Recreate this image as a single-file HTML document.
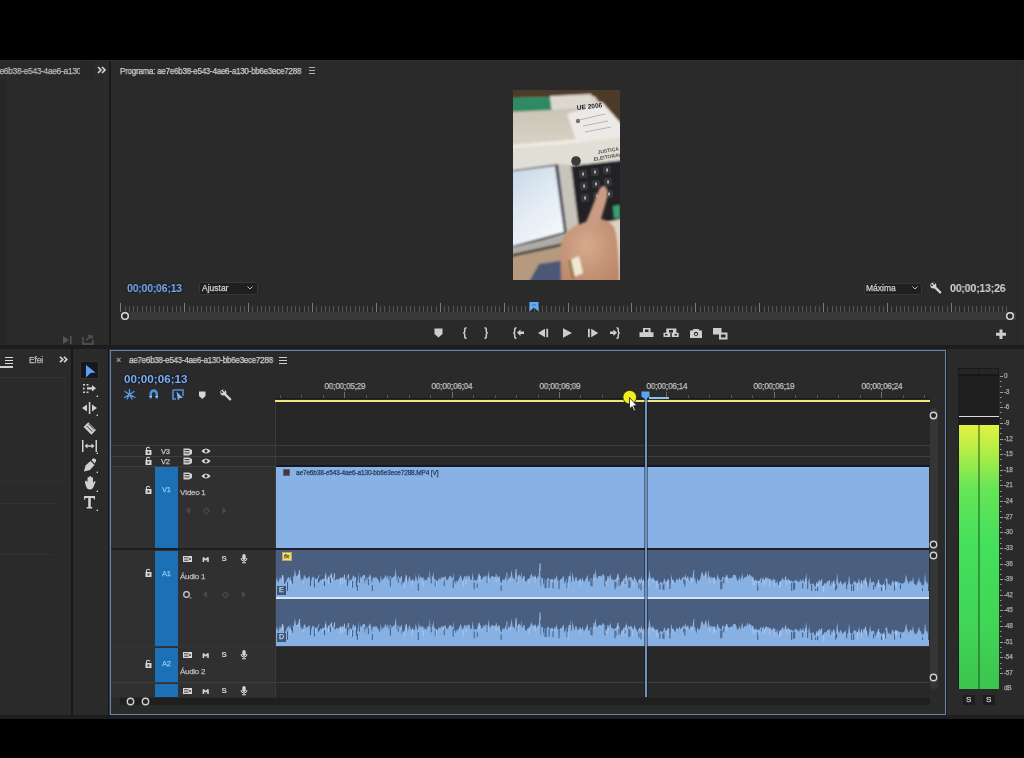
<!DOCTYPE html>
<html><head><meta charset="utf-8">
<style>
*{box-sizing:border-box}
html,body{margin:0;padding:0}
body{width:1024px;height:758px;background:#000;overflow:hidden;position:relative;font-family:"Liberation Sans",sans-serif;color:#c4c4c4}
.a{position:absolute}
.t{position:absolute;white-space:nowrap;font-size:8px;line-height:10px;-webkit-font-smoothing:antialiased;will-change:transform;-webkit-text-stroke:0.25px currentColor}
svg{position:absolute;overflow:visible}
</style></head><body>
<svg width="0" height="0" style="position:absolute"><defs><filter id="wb" x="-1%" y="-10%" width="102%" height="120%"><feGaussianBlur stdDeviation="0.45"/></filter></defs></svg>
<!-- top-left panel -->
<div class="a" style="left:0;top:60px;width:109px;height:286px;background:#2a2a2a"></div><div class="a" style="left:0;top:80px;width:6px;height:266px;background:#262626"></div>
<div class="a" style="left:109px;top:60px;width:2px;height:290px;background:#1a1a1a"></div>
<!-- program monitor -->
<div class="a" style="left:111px;top:60px;width:913px;height:286px;background:#2a2a2a"></div><div class="a" style="left:1017px;top:61px;width:2px;height:285px;background:#272727"></div><div class="a" style="left:0;top:60px;width:1024px;height:1px;background:#303030"></div>
<!-- gap -->
<div class="a" style="left:0;top:345px;width:1024px;height:4px;background:#1c1c1e"></div>
<!-- bottom panels -->
<div class="a" style="left:0;top:349px;width:71px;height:366px;background:#2a2a2a"></div>
<div class="a" style="left:71px;top:349px;width:2px;height:366px;background:#181818"></div>
<div class="a" style="left:73px;top:349px;width:35px;height:366px;background:#2a2a2a"></div>
<div class="a" style="left:108px;top:349px;width:2px;height:366px;background:#161616"></div>
<div class="a" style="left:110px;top:350px;width:836px;height:365px;background:#2a2a2a;border:1px solid #6a84ac;box-shadow:0 0 0 1px rgba(70,95,140,0.5)"></div>
<div class="a" style="left:946px;top:349px;width:1px;height:366px;background:#1c1c1c"></div>
<div class="a" style="left:947px;top:349px;width:77px;height:366px;background:#2a2a2a"></div>
<div class="a" style="left:0;top:715px;width:1024px;height:4px;background:#1e1e1e"></div>
<!-- top-left panel content -->
<div class="t" style="left:-5px;top:66px;font-size:8.5px;color:#bdbdbd;letter-spacing:-0.3px;transform-origin:0 0;transform:scaleX(0.985)">7e6b38-e543-4ae6-a130</div>
<div class="a" style="left:80px;top:61px;width:14px;height:20px;background:#272727"></div>
<svg style="left:97px;top:66px" width="10" height="8" viewBox="0 0 10 8"><path d="M1,1 L4,4 L1,7 M5,1 L8,4 L5,7" stroke="#d8d8d8" stroke-width="1.6" fill="none"/></svg>

<svg style="left:62px;top:335px" width="12" height="10" viewBox="0 0 12 10"><path d="M1,1 L7,5 L1,9 Z" fill="#555"/><rect x="8" y="1" width="1.5" height="8" fill="#555"/></svg>
<svg style="left:82px;top:334px" width="12" height="11" viewBox="0 0 12 11"><path d="M1,3 V10 H11 V6 M4,6 L9,3 M6,2 H10 V5" stroke="#555" stroke-width="1.4" fill="none"/></svg>

<!-- program monitor content -->
<div class="t" style="left:120px;top:65.5px;font-size:8.5px;color:#cfcfcf;letter-spacing:-0.25px;transform-origin:0 0;transform:scaleX(0.94)">Programa: ae7e6b38-e543-4ae6-a130-bb6e3ece7288</div>
<svg style="left:309px;top:67px" width="7" height="7" viewBox="0 0 7 7"><path d="M0,0.5 H6 M0,3.5 H6 M0,6.5 H6" stroke="#b0b0b0" stroke-width="1"/></svg>

<div class="t" style="left:126.5px;top:282px;font-size:11px;line-height:12px;font-weight:bold;color:#80b0ee;letter-spacing:-0.2px;-webkit-text-stroke:0;text-shadow:0 0 2px #061028,0 0 1px #061028,0 0 1px #061028;transform-origin:0 0;transform:scaleX(0.95)">00;00;06;13</div>
<div class="a" style="left:199px;top:282px;width:59px;height:13px;background:#1f1f1f;border:1px solid #363636;border-radius:2px"></div>
<div class="t" style="left:202px;top:283px;font-size:8.5px;color:#d0d0d0">Ajustar</div>
<svg style="left:247px;top:286px" width="6" height="4" viewBox="0 0 6 4"><path d="M0.5,0.5 L3,3 L5.5,0.5" stroke="#bbb" stroke-width="1" fill="none"/></svg>
<div class="a" style="left:863.5px;top:282.5px;width:58px;height:12px;background:#1f1f1f;border:1px solid #363636;border-radius:2px"></div>
<div class="t" style="left:866px;top:283px;font-size:8.5px;color:#d0d0d0">Máxima</div>
<svg style="left:912px;top:286px" width="6" height="4" viewBox="0 0 6 4"><path d="M0.5,0.5 L3,3 L5.5,0.5" stroke="#bbb" stroke-width="1" fill="none"/></svg>
<svg style="left:930px;top:282px" width="12" height="12" viewBox="0 0 12 12"><circle cx="3.3" cy="3.6" r="3" fill="#d4d4d4"/><path d="M3.8,4.2 L10.2,10.4" stroke="#d4d4d4" stroke-width="2.3" stroke-linecap="round"/><path d="M0.8,1.2 L3.2,3.6 L1.5,4.6 Z M2.2,0.2 L4.3,2.9 L5.6,1 Z" fill="#2a2a2a"/></svg>
<div class="t" style="left:950px;top:282px;font-size:11px;line-height:12px;font-weight:bold;color:#d4d4d4;letter-spacing:-0.2px;-webkit-text-stroke:0;transform-origin:0 0;transform:scaleX(0.96)">00;00;13;26</div>
<!-- monitor ruler -->
<svg style="left:0;top:0" width="1024" height="758"><path d="M125.5,306V312M129.5,306V312M133.5,306V312M137.5,306V312M142.5,306V312M146.5,306V312M150.5,306V312M154.5,306V312M159.5,306V312M163.5,306V312M167.5,306V312M172.5,306V312M176.5,306V312M180.5,306V312M189.5,306V312M193.5,306V312M197.5,306V312M201.5,306V312M206.5,306V312M210.5,306V312M214.5,306V312M218.5,306V312M223.5,306V312M227.5,306V312M231.5,306V312M235.5,306V312M240.5,306V312M244.5,306V312M252.5,306V312M257.5,306V312M261.5,306V312M265.5,306V312M269.5,306V312M274.5,306V312M278.5,306V312M282.5,306V312M287.5,306V312M291.5,306V312M295.5,306V312M299.5,306V312M304.5,306V312M308.5,306V312M316.5,306V312M321.5,306V312M325.5,306V312M329.5,306V312M333.5,306V312M338.5,306V312M342.5,306V312M346.5,306V312M350.5,306V312M355.5,306V312M359.5,306V312M363.5,306V312M367.5,306V312M372.5,306V312M380.5,306V312M384.5,306V312M389.5,306V312M393.5,306V312M397.5,306V312M401.5,306V312M406.5,306V312M410.5,306V312M414.5,306V312M419.5,306V312M423.5,306V312M427.5,306V312M431.5,306V312M436.5,306V312M444.5,306V312M448.5,306V312M453.5,306V312M457.5,306V312M461.5,306V312M465.5,306V312M470.5,306V312M474.5,306V312M478.5,306V312M482.5,306V312M487.5,306V312M491.5,306V312M495.5,306V312M499.5,306V312M508.5,306V312M512.5,306V312M516.5,306V312M521.5,306V312M525.5,306V312M529.5,306V312M534.5,306V312M538.5,306V312M542.5,306V312M546.5,306V312M551.5,306V312M555.5,306V312M559.5,306V312M563.5,306V312M572.5,306V312M576.5,306V312M580.5,306V312M585.5,306V312M589.5,306V312M593.5,306V312M597.5,306V312M602.5,306V312M606.5,306V312M610.5,306V312M614.5,306V312M619.5,306V312M623.5,306V312M627.5,306V312M636.5,306V312M640.5,306V312M644.5,306V312M649.5,306V312M653.5,306V312M657.5,306V312M661.5,306V312M666.5,306V312M670.5,306V312M674.5,306V312M678.5,306V312M683.5,306V312M687.5,306V312M691.5,306V312M700.5,306V312M704.5,306V312M708.5,306V312M712.5,306V312M717.5,306V312M721.5,306V312M725.5,306V312M729.5,306V312M734.5,306V312M738.5,306V312M742.5,306V312M746.5,306V312M751.5,306V312M755.5,306V312M764.5,306V312M768.5,306V312M772.5,306V312M776.5,306V312M781.5,306V312M785.5,306V312M789.5,306V312M793.5,306V312M798.5,306V312M802.5,306V312M806.5,306V312M810.5,306V312M815.5,306V312M819.5,306V312M827.5,306V312M832.5,306V312M836.5,306V312M840.5,306V312M844.5,306V312M849.5,306V312M853.5,306V312M857.5,306V312M861.5,306V312M866.5,306V312M870.5,306V312M874.5,306V312M879.5,306V312M883.5,306V312M891.5,306V312M896.5,306V312M900.5,306V312M904.5,306V312M908.5,306V312M913.5,306V312M917.5,306V312M921.5,306V312M925.5,306V312M930.5,306V312M934.5,306V312M938.5,306V312M942.5,306V312M947.5,306V312M955.5,306V312M959.5,306V312M964.5,306V312M968.5,306V312M972.5,306V312M976.5,306V312M981.5,306V312M985.5,306V312M989.5,306V312M993.5,306V312M998.5,306V312M1002.5,306V312M1006.5,306V312" stroke="#525252" stroke-width="1"/><path d="M120.5,303V312M184.5,303V312M248.5,303V312M312.5,303V312M376.5,303V312M440.5,303V312M504.5,303V312M568.5,303V312M631.5,303V312M695.5,303V312M759.5,303V312M823.5,303V312M887.5,303V312M951.5,303V312" stroke="#7a7a7a" stroke-width="1"/></svg>
<div class="a" style="left:120px;top:312px;width:896px;height:8px;background:#393939"></div>
<div class="a" style="left:120px;top:312px;width:10px;height:8px;background:#303030"></div>
<svg style="left:120px;top:311px" width="10" height="10" viewBox="0 0 10 10"><circle cx="5" cy="5" r="3.3" fill="#2a2a2a" stroke="#dcdcdc" stroke-width="1.5"/></svg>
<svg style="left:1005px;top:311px" width="10" height="10" viewBox="0 0 10 10"><circle cx="5" cy="5" r="3.3" fill="#2a2a2a" stroke="#dcdcdc" stroke-width="1.5"/></svg>
<svg style="left:528.5px;top:302px" width="10" height="10" viewBox="0 0 10 10"><path d="M0.5,0 H9.5 V9.5 L5,5.5 L0.5,9.5 Z" fill="#64aaf4"/><path d="M3,2 H7 V4.5 L5,3.5 L3,4.5 Z" fill="#4a90e0"/></svg>
<!-- transport -->
<svg style="left:0;top:0" width="1024" height="758">
<g fill="#cdcdcd" stroke="none">
<path d="M434.5,328.5 H442.5 V334 L438.5,337.5 L434.5,334 Z"/>
<path d="M466.5,327.8 q-1.8,0 -1.8,1.8 v1.8 q0,1.4 -1.4,1.6 q1.4,0.2 1.4,1.6 v1.8 q0,1.8 1.8,1.8" stroke="#cdcdcd" stroke-width="1.5" fill="none"/>
<path d="M484.5,327.8 q1.8,0 1.8,1.8 v1.8 q0,1.4 1.4,1.6 q-1.4,0.2 -1.4,1.6 v1.8 q0,1.8 -1.8,1.8" stroke="#cdcdcd" stroke-width="1.5" fill="none"/>
<path d="M516.5,327.8 q-1.8,0 -1.8,1.8 v1.8 q0,1.4 -1.4,1.6 q1.4,0.2 1.4,1.6 v1.8 q0,1.8 1.8,1.8" stroke="#cdcdcd" stroke-width="1.5" fill="none"/>
<path d="M517,332.8 L520.5,329.5 V331.6 H524 V334 H520.5 V336 Z"/>
<path d="M538,333 L545,328.8 V337.2 Z"/><rect x="546.3" y="328.8" width="1.8" height="8.4"/>
<path d="M563,328.3 L572,333 L563,337.7 Z"/>
<rect x="588" y="328.8" width="1.8" height="8.4"/><path d="M591.2,328.8 L598.2,333 L591.2,337.2 Z"/>
<path d="M616.5,327.8 q1.8,0 1.8,1.8 v1.8 q0,1.4 1.4,1.6 q-1.4,0.2 -1.4,1.6 v1.8 q0,1.8 -1.8,1.8" stroke="#cdcdcd" stroke-width="1.5" fill="none"/>
<path d="M617,332.8 L613.5,329.5 V331.6 H610 V334 H613.5 V336 Z"/>
<path d="M643,328 H650.5 V332.3 H653.5 V337 H639.5 V332.3 H643 Z M645,329.5 V332 H648.5 V329.5 Z" fill-rule="evenodd"/>
<path d="M666.3,328.5 H676.4 V332.7 H678.7 V337 H663.5 V332.7 H666.3 Z M669,330 V332.5 H673 V330 Z M665,334 V335.5 H667.5 V334 Z M674.5,334 V335.5 H677 V334 Z M670.3,332.7 V337 H671.8 V332.7 Z" fill-rule="evenodd"/>
<path d="M690,330.5 H692.5 L693.5,329 H698.5 L699.5,330.5 H702 V338 H690 Z M696,331.8 A2.2,2.2 0 1 0 696.01,331.8 Z M696,332.9 A1.2,1.2 0 1 1 695.99,332.9 Z" fill-rule="evenodd"/>
<rect x="713" y="328" width="8.5" height="6.5"/><path d="M719,332.5 H727.5 V339.5 H719 Z M721,334.5 V337.5 H725.5 V334.5 Z" fill-rule="evenodd"/>
<path d="M999.5,329.5 H1002.5 V332.8 H1006 V335.8 H1002.5 V339 H999.5 V335.8 H996 V332.8 H999.5 Z"/>
</g></svg>
<!-- video frame -->
<svg style="left:513px;top:90px" width="107" height="190" viewBox="0 0 107 190">
<defs>
<filter id="bl" x="-10%" y="-10%" width="120%" height="120%"><feGaussianBlur stdDeviation="1.2"/></filter>
<filter id="bl2" x="-10%" y="-10%" width="120%" height="120%"><feGaussianBlur stdDeviation="0.6"/></filter>
<linearGradient id="scr" x1="0" y1="0" x2="0.6" y2="1"><stop offset="0" stop-color="#c4d4e6"/><stop offset="0.45" stop-color="#dde7f2"/><stop offset="1" stop-color="#f4f7fb"/></linearGradient>
<linearGradient id="body" x1="0" y1="0" x2="0" y2="1"><stop offset="0" stop-color="#c9c4b4"/><stop offset="1" stop-color="#dcd8cc"/></linearGradient>
<radialGradient id="skin" cx="0.45" cy="0.4" r="0.7"><stop offset="0" stop-color="#d6aa8e"/><stop offset="1" stop-color="#b98568"/></radialGradient>
<clipPath id="vc"><rect width="107" height="190"/></clipPath>
</defs>
<g clip-path="url(#vc)">
<rect width="107" height="190" fill="#cfc9ba"/>
<g filter="url(#bl)">
<path d="M-5,-5 H112 V46 L82,6 L-5,8 Z" fill="#4e3a2c"/>
<path d="M-5,8 L37,7 L39,22 L-5,24 Z" fill="#2f8a62"/>
<path d="M37,6 L78,4 L84,17 L39,21 Z" fill="#dcd8d0"/>
<path d="M-5,22 L39,20 L84,16 L60,24 L66,62 L-5,72 Z" fill="url(#body)"/>
<path d="M54,24 L89,12 L112,38 L112,48 L64,53 Z" fill="#ece9e6"/>
<path d="M-5,60 L64,53 L112,47 L112,78 L-5,86 Z" fill="#e1ded6"/>
<path d="M-5,55 L66,49 L66,53 L-5,59 Z" fill="#eeebe4"/>
<path d="M57,76 L112,70 L112,134 L66,140 Z" fill="#222427"/>
<path d="M-5,81 L46,74 L55,143 L-5,160 Z" fill="#3b3e48"/>
<path d="M-5,82 L42,76 L51,142 L-5,157 Z" fill="url(#scr)"/>
<path d="M45,74 L58,75 L66,140 L54,144 Z" fill="#c8c4bc"/>
<path d="M-5,158 L62,143 L64,152 L-5,170 Z" fill="#aeaba6"/>
<path d="M-5,165 L64,150 L64,153 L-5,168 Z" fill="#4a3e34"/>
<path d="M-5,168 L64,153 L70,195 L-5,195 Z" fill="#b59a80"/>
<path d="M14,195 L26,174 L52,170 L56,195 Z" fill="#4c5878"/>
<path d="M94,132 L112,128 L112,195 L94,195 Z" fill="#dcd2c2"/>
<path d="M100,116 L107,115 L107,128 L101,128 Z" fill="#3c9e6e"/>
</g>
<g filter="url(#bl2)"><g fill="#34363a"><rect x="66" y="80" width="8" height="8" rx="1.5" transform="rotate(-6 70 84)"/><rect x="78" y="78" width="8" height="8" rx="1.5" transform="rotate(-6 82 82)"/><rect x="90" y="76" width="8" height="8" rx="1.5" transform="rotate(-6 94 80)"/><rect x="67" y="92" width="8" height="8" rx="1.5" transform="rotate(-6 71 96)"/><rect x="79" y="90" width="8" height="8" rx="1.5" transform="rotate(-6 83 94)"/><rect x="91" y="88" width="8" height="8" rx="1.5" transform="rotate(-6 95 92)"/><rect x="68" y="104" width="8" height="8" rx="1.5" transform="rotate(-6 72 108)"/><rect x="80" y="102" width="8" height="8" rx="1.5" transform="rotate(-6 84 106)"/><rect x="92" y="100" width="8" height="8" rx="1.5" transform="rotate(-6 96 104)"/></g><g fill="#d0d0d0"><rect x="69.3" y="82.5" width="1.5" height="3"/><rect x="81.3" y="80.5" width="1.5" height="3"/><rect x="93.3" y="78.5" width="1.5" height="3"/><rect x="70.3" y="94.5" width="1.5" height="3"/><rect x="82.3" y="92.5" width="1.5" height="3"/><rect x="94.3" y="90.5" width="1.5" height="3"/><rect x="71.3" y="106.5" width="1.5" height="3"/><rect x="83.3" y="104.5" width="1.5" height="3"/><rect x="95.3" y="102.5" width="1.5" height="3"/></g></g>
<g filter="url(#bl)">
<path d="M48,195 L47,158 Q50,142 62,136 L80,129 Q94,127 101,137 Q106,152 106,195 Z" fill="url(#skin)"/>
<path d="M70,140 L86,100 Q89,94 93,97 Q96,102 93,112 L84,142 Z" fill="#c99b82"/>
<path d="M57,170 L66,166 L70,183 L61,187 Z" fill="#f1e9d4"/>
<path d="M55,171 L58,169 L62,188 L59,190 Z" fill="#9c7a4a"/>
</g>
<g filter="url(#bl2)">
<text x="64" y="20" font-size="6.6" font-weight="bold" fill="#1e1e1e" font-family="Liberation Sans" transform="rotate(-6 64 20)">UE 2006</text>
<path d="M66,30 L92,24 M70,36 L95,31 M72,42 L98,37" stroke="#b8b4b2" stroke-width="1"/>
<circle cx="65" cy="31" r="2.2" fill="#777"/>
<text x="85" y="64" font-size="5" font-weight="bold" fill="#505050" font-family="Liberation Sans" transform="rotate(-10 85 64)">JUSTIÇA</text>
<text x="81" y="71" font-size="5" font-weight="bold" fill="#505050" font-family="Liberation Sans" transform="rotate(-10 81 71)">ELEITORAL</text>
<circle cx="63" cy="71" r="4.8" fill="#3a3a3a"/>

</g>
</g></svg>
<!-- timeline ruler -->
<svg style="left:0;top:0" width="1024" height="758"><path d="M280.5,395V399M301.5,395V399M323.5,395V399M366.5,395V399M387.5,395V399M409.5,395V399M430.5,395V399M473.5,395V399M495.5,395V399M516.5,395V399M538.5,395V399M580.5,395V399M602.5,395V399M623.5,395V399M645.5,395V399M688.5,395V399M709.5,395V399M731.5,395V399M752.5,395V399M795.5,395V399M817.5,395V399M838.5,395V399M860.5,395V399M903.5,395V399M924.5,395V399" stroke="#555" stroke-width="1"/><path d="M344.5,392V399M452.5,392V399M559.5,392V399M666.5,392V399M774.5,392V399M881.5,392V399" stroke="#6e6e6e" stroke-width="1"/></svg>
<div class="t" style="left:319.7px;top:381px;width:50px;text-align:center;font-size:9px;color:#c2c2c2;letter-spacing:-0.2px;transform:scaleX(0.9)">00;00;05;29</div>
<div class="t" style="left:427.1px;top:381px;width:50px;text-align:center;font-size:9px;color:#c2c2c2;letter-spacing:-0.2px;transform:scaleX(0.9)">00;00;06;04</div>
<div class="t" style="left:534.5px;top:381px;width:50px;text-align:center;font-size:9px;color:#c2c2c2;letter-spacing:-0.2px;transform:scaleX(0.9)">00;00;06;09</div>
<div class="t" style="left:641.9px;top:381px;width:50px;text-align:center;font-size:9px;color:#c2c2c2;letter-spacing:-0.2px;transform:scaleX(0.9)">00;00;06;14</div>
<div class="t" style="left:749.3px;top:381px;width:50px;text-align:center;font-size:9px;color:#c2c2c2;letter-spacing:-0.2px;transform:scaleX(0.9)">00;00;06;19</div>
<div class="t" style="left:856.7px;top:381px;width:50px;text-align:center;font-size:9px;color:#c2c2c2;letter-spacing:-0.2px;transform:scaleX(0.9)">00;00;06;24</div>
<!-- timeline header -->
<div class="t" style="left:116px;top:355px;font-size:9px;color:#aaa">×</div>
<div class="t" style="left:129px;top:355px;font-size:8.5px;color:#d0d0d0;letter-spacing:-0.3px;transform-origin:0 0;transform:scaleX(0.95)">ae7e6b38-e543-4ae6-a130-bb6e3ece7288</div>
<svg style="left:279px;top:357px" width="8" height="7" viewBox="0 0 8 7"><path d="M0,0.5 H8 M0,3.5 H8 M0,6.5 H8" stroke="#d0d0d0" stroke-width="1"/></svg>
<div class="t" style="left:123.5px;top:372.5px;font-size:11px;line-height:12px;font-weight:bold;color:#80b0ee;letter-spacing:0px;-webkit-text-stroke:0;text-shadow:0 0 2px #061028,0 0 1px #061028,0 0 1px #061028;transform-origin:0 0;transform:scaleX(1.06)">00;00;06;13</div>
<!-- track area -->
<div class="a" style="left:111px;top:467px;width:164px;height:230px;background:#303030"></div><div class="a" style="left:111px;top:446px;width:164px;height:21px;background:#2c2c2c"></div>
<div class="a" style="left:276px;top:402px;width:654px;height:296px;background:#282828"></div>
<div class="a" style="left:275px;top:402px;width:1px;height:296px;background:#3a3a3a"></div>
<div class="a" style="left:276px;top:402px;width:654px;height:43px;background:#262626"></div><div class="a" style="left:111px;top:445px;width:819px;height:1px;background:#3e3e3e"></div>
<div class="a" style="left:111px;top:456px;width:819px;height:1px;background:#3e3e3e"></div>
<div class="a" style="left:276px;top:465px;width:654px;height:2px;background:#151a22"></div><div class="a" style="left:111px;top:466px;width:164px;height:1px;background:#3e3e3e"></div>
<div class="a" style="left:111px;top:548px;width:819px;height:2px;background:#1e1e1e"></div>
<div class="a" style="left:111px;top:646px;width:819px;height:1px;background:#363636"></div>
<div class="a" style="left:111px;top:682px;width:819px;height:1px;background:#3e3e3e"></div>
<div class="a" style="left:275px;top:398px;width:655px;height:1px;background:#1a1a1a"></div><div class="a" style="left:275px;top:399.5px;width:655px;height:2.5px;background:#e8e87c"></div>
<!-- video clip -->
<div class="a" style="left:276px;top:467px;width:653px;height:81px;background:#88b2e6"></div>
<div class="a" style="left:283px;top:469px;width:7px;height:7px;background:#3a3a48;border:1px solid #6a5a6a"></div>
<div class="t" style="left:296px;top:468px;font-size:6.5px;color:#29405f;letter-spacing:-0.15px">ae7e6b38-e543-4ae6-a130-bb6e3ece7288.MP4 [V]</div>
<!-- audio clip -->
<div class="a" style="left:276px;top:550px;width:653px;height:96px;background:#4a5f80"></div>
<svg style="left:276px;top:550px" width="653" height="47" viewBox="0 0 654 47"><g filter="url(#wb)"><path d="M0,47 L0,31.5 L1,26.9 L2,33.1 L3,30.9 L4,26.7 L5,29.8 L6,26.4 L7,25.1 L8,28.5 L9,32.7 L10,32.0 L11,29.2 L12,27.3 L13,26.9 L14,30.1 L15,25.5 L16,26.2 L17,28.0 L18,25.8 L19,19.1 L20,26.0 L21,25.9 L22,24.8 L23,22.7 L24,23.7 L25,30.8 L26,27.9 L27,31.0 L28,25.3 L29,25.5 L30,28.4 L31,28.6 L32,27.7 L33,26.3 L34,26.9 L35,31.7 L36,27.9 L37,26.6 L38,27.6 L39,29.5 L40,28.8 L41,28.8 L42,27.5 L43,24.1 L44,29.9 L45,29.6 L46,31.2 L47,28.2 L48,29.8 L49,27.6 L50,21.2 L51,30.5 L52,27.7 L53,29.0 L54,24.9 L55,25.4 L56,27.9 L57,31.6 L58,24.9 L59,30.9 L60,29.4 L61,28.7 L62,29.8 L63,29.1 L64,27.9 L65,29.5 L66,27.7 L67,28.9 L68,27.1 L69,30.0 L70,29.6 L71,27.1 L72,26.0 L73,32.9 L74,27.7 L75,30.7 L76,30.2 L77,25.8 L78,25.5 L79,29.3 L80,29.5 L81,34.4 L82,29.5 L83,23.0 L84,24.8 L85,28.6 L86,27.2 L87,25.6 L88,25.1 L89,34.4 L90,26.6 L91,30.5 L92,26.9 L93,27.4 L94,23.9 L95,26.2 L96,33.6 L97,27.7 L98,27.3 L99,28.5 L100,26.6 L101,28.0 L102,29.3 L103,30.4 L104,34.0 L105,24.4 L106,31.5 L107,28.5 L108,28.8 L109,26.7 L110,24.6 L111,29.0 L112,24.8 L113,30.8 L114,25.8 L115,26.2 L116,28.8 L117,27.2 L118,26.7 L119,25.3 L120,18.2 L121,30.9 L122,26.3 L123,26.8 L124,28.7 L125,28.0 L126,36.1 L127,30.9 L128,33.3 L129,29.9 L130,25.6 L131,26.6 L132,32.9 L133,27.5 L134,26.1 L135,30.8 L136,31.0 L137,28.2 L138,31.3 L139,30.7 L140,24.5 L141,28.9 L142,31.8 L143,23.0 L144,29.3 L145,26.3 L146,28.1 L147,32.3 L148,26.5 L149,31.2 L150,29.3 L151,30.4 L152,26.9 L153,27.2 L154,19.6 L155,24.5 L156,27.7 L157,25.4 L158,21.7 L159,29.1 L160,30.7 L161,30.6 L162,31.4 L163,27.5 L164,29.5 L165,28.8 L166,26.5 L167,28.7 L168,27.2 L169,27.1 L170,31.5 L171,28.6 L172,30.2 L173,27.8 L174,25.9 L175,25.7 L176,28.6 L177,27.4 L178,23.0 L179,28.2 L180,34.6 L181,30.1 L182,31.7 L183,29.3 L184,27.2 L185,24.8 L186,28.4 L187,31.8 L188,27.6 L189,25.5 L190,28.5 L191,30.7 L192,25.9 L193,25.3 L194,26.7 L195,29.9 L196,30.3 L197,21.8 L198,31.2 L199,30.1 L200,30.0 L201,31.1 L202,27.4 L203,24.6 L204,26.5 L205,31.2 L206,28.7 L207,28.8 L208,25.4 L209,27.7 L210,25.3 L211,25.7 L212,28.2 L213,20.3 L214,28.8 L215,28.1 L216,25.9 L217,26.0 L218,26.8 L219,27.3 L220,26.5 L221,29.1 L222,26.1 L223,27.7 L224,28.3 L225,32.6 L226,33.1 L227,28.6 L228,30.1 L229,29.4 L230,26.9 L231,22.6 L232,23.0 L233,28.7 L234,29.0 L235,25.4 L236,19.8 L237,27.7 L238,28.0 L239,30.1 L240,20.8 L241,26.0 L242,27.9 L243,24.6 L244,25.0 L245,26.8 L246,21.9 L247,27.9 L248,26.5 L249,31.7 L250,30.9 L251,31.8 L252,29.1 L253,29.2 L254,28.0 L255,25.4 L256,23.1 L257,27.1 L258,26.3 L259,27.3 L260,26.4 L261,29.0 L262,26.2 L263,26.7 L264,16.0 L265,27.3 L266,28.3 L267,28.5 L268,36.0 L269,29.5 L270,30.2 L271,31.0 L272,27.6 L273,28.5 L274,29.4 L275,30.1 L276,28.9 L277,30.1 L278,30.9 L279,28.7 L280,30.9 L281,24.6 L282,30.5 L283,30.3 L284,31.1 L285,29.0 L286,28.9 L287,27.2 L288,25.3 L289,34.1 L290,31.4 L291,28.1 L292,34.0 L293,26.2 L294,26.5 L295,21.3 L296,32.4 L297,22.0 L298,28.0 L299,32.1 L300,27.1 L301,27.3 L302,31.3 L303,30.3 L304,30.9 L305,28.7 L306,31.0 L307,27.0 L308,31.6 L309,31.7 L310,29.2 L311,27.4 L312,24.6 L313,31.9 L314,31.3 L315,28.8 L316,28.2 L317,30.0 L318,26.4 L319,28.6 L320,18.4 L321,27.8 L322,28.2 L323,26.0 L324,26.0 L325,25.8 L326,27.0 L327,24.6 L328,24.3 L329,26.8 L330,31.5 L331,32.9 L332,28.3 L333,28.8 L334,27.1 L335,23.6 L336,30.0 L337,28.4 L338,30.5 L339,29.7 L340,29.5 L341,28.2 L342,25.1 L343,27.0 L344,28.4 L345,36.3 L346,31.0 L347,32.4 L348,30.3 L349,29.0 L350,28.3 L351,23.3 L352,30.4 L353,26.5 L354,28.4 L355,27.1 L356,27.1 L357,30.6 L358,31.7 L359,25.6 L360,29.0 L361,30.5 L362,33.3 L363,30.3 L364,29.0 L365,31.7 L366,26.1 L367,32.1 L368,28.5 L369,31.2 L370,31.7 L371,33.3 L372,30.1 L373,28.9 L374,19.8 L375,27.4 L376,28.4 L377,29.2 L378,29.2 L379,29.6 L380,31.0 L381,31.3 L382,29.6 L383,33.6 L384,33.9 L385,31.7 L386,32.2 L387,33.4 L388,31.4 L389,27.7 L390,31.4 L391,32.0 L392,30.5 L393,28.8 L394,30.8 L395,34.5 L396,24.0 L397,30.9 L398,29.4 L399,32.5 L400,32.4 L401,28.7 L402,29.3 L403,30.4 L404,26.9 L405,30.6 L406,28.9 L407,28.1 L408,26.5 L409,28.4 L410,23.6 L411,29.6 L412,28.2 L413,28.6 L414,31.3 L415,26.4 L416,28.2 L417,27.7 L418,21.2 L419,19.4 L420,30.1 L421,34.8 L422,27.8 L423,31.1 L424,30.6 L425,28.2 L426,22.8 L427,21.9 L428,25.6 L429,25.9 L430,22.6 L431,25.0 L432,29.1 L433,19.4 L434,27.9 L435,29.3 L436,26.9 L437,27.2 L438,29.2 L439,27.7 L440,29.7 L441,30.9 L442,23.7 L443,27.1 L444,28.9 L445,29.9 L446,30.9 L447,26.8 L448,26.7 L449,28.5 L450,27.0 L451,25.4 L452,26.7 L453,28.2 L454,28.5 L455,28.2 L456,27.0 L457,28.4 L458,24.4 L459,24.9 L460,24.9 L461,27.1 L462,30.7 L463,30.6 L464,26.0 L465,30.7 L466,27.6 L467,23.0 L468,29.4 L469,27.8 L470,26.5 L471,27.7 L472,23.2 L473,26.7 L474,24.0 L475,25.4 L476,25.7 L477,28.7 L478,27.8 L479,31.0 L480,32.2 L481,30.0 L482,31.2 L483,30.8 L484,31.2 L485,28.4 L486,27.2 L487,29.4 L488,26.9 L489,30.7 L490,29.7 L491,27.0 L492,28.7 L493,27.5 L494,31.1 L495,28.8 L496,30.6 L497,31.1 L498,28.5 L499,29.9 L500,32.9 L501,33.3 L502,30.0 L503,35.7 L504,34.4 L505,31.5 L506,30.6 L507,28.1 L508,29.1 L509,31.0 L510,26.9 L511,32.1 L512,30.2 L513,28.2 L514,31.5 L515,31.5 L516,30.5 L517,31.6 L518,31.4 L519,31.7 L520,29.5 L521,30.7 L522,30.4 L523,31.9 L524,32.5 L525,28.8 L526,31.5 L527,30.9 L528,28.3 L529,32.7 L530,31.3 L531,22.7 L532,31.9 L533,33.4 L534,27.0 L535,34.7 L536,33.5 L537,34.2 L538,32.9 L539,34.9 L540,37.4 L541,33.6 L542,33.9 L543,33.3 L544,29.2 L545,31.6 L546,30.3 L547,35.7 L548,36.2 L549,33.2 L550,33.2 L551,33.7 L552,31.2 L553,31.1 L554,30.5 L555,30.6 L556,31.4 L557,33.8 L558,31.6 L559,31.0 L560,35.2 L561,33.3 L562,23.0 L563,31.4 L564,34.4 L565,31.3 L566,31.2 L567,34.5 L568,34.6 L569,32.2 L570,33.1 L571,30.7 L572,35.5 L573,33.4 L574,24.6 L575,33.6 L576,34.6 L577,35.0 L578,33.6 L579,30.4 L580,32.0 L581,31.8 L582,35.1 L583,31.7 L584,27.9 L585,34.3 L586,32.3 L587,35.0 L588,31.0 L589,29.6 L590,29.9 L591,31.9 L592,33.5 L593,38.7 L594,33.3 L595,26.6 L596,32.7 L597,32.0 L598,32.0 L599,31.5 L600,38.0 L601,35.5 L602,32.8 L603,32.1 L604,32.4 L605,33.7 L606,34.8 L607,35.3 L608,35.2 L609,37.1 L610,30.3 L611,28.6 L612,28.2 L613,35.3 L614,33.2 L615,35.1 L616,36.1 L617,31.1 L618,30.5 L619,33.8 L620,32.3 L621,33.3 L622,30.9 L623,31.7 L624,33.5 L625,32.5 L626,33.2 L627,33.9 L628,33.1 L629,33.2 L630,30.5 L631,24.3 L632,29.4 L633,32.3 L634,33.9 L635,30.2 L636,31.0 L637,32.1 L638,26.6 L639,33.6 L640,34.6 L641,35.6 L642,33.5 L643,31.5 L644,27.6 L645,32.3 L646,32.3 L647,36.4 L648,34.1 L649,36.1 L650,22.9 L651,32.9 L652,31.2 L653,35.2 L654,35.6 L654,47 Z" fill="#88b1e3"/><path d="M8.5,29.4V33.9 M11.5,32.2V41.0 M15.5,26.0V31.2 M16.5,27.6V33.8 M34.5,27.6V36.1 M38.5,29.5V37.4 M42.5,28.2V32.7 M43.5,26.5V31.4 M48.5,31.0V36.1 M54.5,27.8V32.9 M71.5,27.2V36.1 M76.5,30.9V37.7 M80.5,30.3V36.6 M81.5,35.0V40.8 M83.5,24.1V32.6 M92.5,28.8V35.2 M96.5,35.2V41.0 M114.5,27.7V36.7 M122.5,28.5V32.7 M142.5,33.3V41.0 M154.5,19.7V28.1 M155.5,26.6V33.4 M158.5,22.1V28.4 M159.5,31.6V36.8 M168.5,28.6V36.2 M177.5,30.2V37.8 M178.5,24.3V31.4 M198.5,32.5V39.3 M201.5,33.6V37.9 M211.5,26.3V33.0 M225.5,35.5V41.0 M231.5,24.3V30.3 M241.5,28.4V32.5 M246.5,24.1V28.7 M265.5,28.0V35.7 M269.5,30.7V38.1 M270.5,30.8V38.2 M273.5,30.0V37.8 M277.5,31.7V38.3 M283.5,30.5V39.2 M291.5,30.2V38.4 M295.5,24.0V32.0 M315.5,29.9V36.2 M316.5,29.2V36.4 M329.5,28.6V36.3 M339.5,31.5V39.3 M340.5,32.3V37.1 M343.5,29.8V35.9 M349.5,29.7V33.9 M353.5,29.5V38.2 M354.5,31.1V37.3 M363.5,32.2V38.5 M365.5,33.0V40.3 M384.5,34.1V39.5 M387.5,35.1V39.4 M388.5,33.4V40.2 M394.5,31.2V39.2 M408.5,29.1V33.5 M409.5,30.1V36.6 M419.5,21.5V28.4 M445.5,31.6V39.5 M446.5,31.1V38.8 M448.5,28.6V33.3 M482.5,33.2V41.0 M486.5,27.6V32.5 M516.5,33.0V41.0 M518.5,32.2V39.8 M519.5,33.1V39.5 M527.5,33.3V38.4 M532.5,32.8V39.1 M536.5,34.7V41.0 M540.5,38.5V41.0 M542.5,36.9V41.0 M555.5,31.1V35.5 M560.5,35.8V40.6 M561.5,34.5V38.9 M571.5,31.9V39.4 M576.5,35.6V41.0 M578.5,34.7V41.0 M598.5,35.0V39.6 M606.5,37.2V41.0 M610.5,30.8V39.7 M619.5,34.4V40.7 M625.5,34.5V39.2 M647.5,38.5V41.0 M653.5,35.6V41.0 " stroke="#3f5a80" stroke-width="1"/><path d="M6.5,25.1V31.2 M14.5,30.1V35.7 M23.5,20.2V28.1 M27.5,30.3V33.6 M39.5,29.3V34.0 M46.5,29.3V33.0 M49.5,25.2V32.2 M52.5,26.7V34.0 M55.5,23.4V28.1 M56.5,27.7V31.2 M58.5,23.4V28.3 M64.5,27.5V35.1 M66.5,27.2V33.9 M68.5,24.7V32.1 M72.5,24.2V28.5 M75.5,30.3V36.9 M79.5,27.0V31.0 M88.5,25.0V28.1 M125.5,26.3V31.8 M128.5,33.3V37.8 M130.5,25.2V32.7 M136.5,29.9V36.9 M146.5,27.7V32.9 M147.5,31.8V36.9 M160.5,30.6V36.7 M167.5,27.5V31.4 M169.5,26.5V31.2 M187.5,30.0V37.1 M190.5,26.2V34.1 M203.5,23.8V30.7 M204.5,26.1V31.7 M212.5,26.4V32.5 M220.5,24.3V32.2 M223.5,26.4V31.9 M234.5,27.8V31.4 M240.5,19.2V26.8 M242.5,27.3V33.8 M248.5,26.0V31.6 M253.5,28.6V34.8 M259.5,25.5V32.5 M264.5,13.5V20.9 M266.5,28.0V35.2 M276.5,28.8V32.3 M279.5,28.3V32.3 M292.5,32.8V39.5 M294.5,26.1V31.7 M304.5,28.6V35.4 M318.5,24.0V30.4 M330.5,30.5V33.8 M331.5,31.9V35.4 M332.5,26.0V31.7 M342.5,23.9V30.0 M347.5,30.7V36.6 M348.5,28.5V33.0 M350.5,26.4V31.3 M357.5,29.3V36.9 M364.5,28.9V34.5 M367.5,30.6V35.7 M373.5,28.6V36.1 M377.5,27.5V33.3 M381.5,30.7V38.5 M392.5,29.6V36.3 M397.5,29.9V34.2 M411.5,27.7V31.1 M412.5,26.5V29.9 M416.5,27.8V32.6 M430.5,21.7V26.6 M434.5,26.5V33.5 M438.5,27.3V34.8 M439.5,27.7V33.3 M451.5,24.9V31.7 M477.5,26.9V34.8 M479.5,30.5V35.6 M480.5,29.7V33.0 M483.5,30.7V36.0 M487.5,28.8V35.4 M489.5,30.2V34.6 M490.5,27.8V32.3 M494.5,28.9V36.5 M499.5,29.8V37.5 M504.5,31.9V38.2 M505.5,31.5V36.9 M510.5,26.5V31.1 M511.5,30.0V35.5 M514.5,30.1V33.9 M530.5,29.2V33.8 M541.5,32.2V37.5 M543.5,31.8V36.2 M546.5,29.4V34.4 M548.5,35.7V42.4 M558.5,30.6V37.8 M582.5,33.1V40.7 M586.5,30.5V38.4 M590.5,27.6V33.7 M591.5,31.6V35.9 M603.5,29.8V37.8 M608.5,33.8V41.0 M609.5,35.8V39.1 M620.5,31.3V37.1 M621.5,32.0V36.4 " stroke="#a8c6ee" stroke-width="1"/></g></svg>
<div class="a" style="left:276px;top:597px;width:653px;height:2px;background:#d8e4f2"></div>
<svg style="left:276px;top:599px" width="653" height="47" viewBox="0 0 654 47"><g filter="url(#wb)"><path d="M0,47 L0,31.5 L1,26.9 L2,33.1 L3,30.9 L4,26.7 L5,29.8 L6,26.4 L7,25.1 L8,28.5 L9,32.7 L10,32.0 L11,29.2 L12,27.3 L13,26.9 L14,30.1 L15,25.5 L16,26.2 L17,28.0 L18,25.8 L19,19.1 L20,26.0 L21,25.9 L22,24.8 L23,22.7 L24,23.7 L25,30.8 L26,27.9 L27,31.0 L28,25.3 L29,25.5 L30,28.4 L31,28.6 L32,27.7 L33,26.3 L34,26.9 L35,31.7 L36,27.9 L37,26.6 L38,27.6 L39,29.5 L40,28.8 L41,28.8 L42,27.5 L43,24.1 L44,29.9 L45,29.6 L46,31.2 L47,28.2 L48,29.8 L49,27.6 L50,21.2 L51,30.5 L52,27.7 L53,29.0 L54,24.9 L55,25.4 L56,27.9 L57,31.6 L58,24.9 L59,30.9 L60,29.4 L61,28.7 L62,29.8 L63,29.1 L64,27.9 L65,29.5 L66,27.7 L67,28.9 L68,27.1 L69,30.0 L70,29.6 L71,27.1 L72,26.0 L73,32.9 L74,27.7 L75,30.7 L76,30.2 L77,25.8 L78,25.5 L79,29.3 L80,29.5 L81,34.4 L82,29.5 L83,23.0 L84,24.8 L85,28.6 L86,27.2 L87,25.6 L88,25.1 L89,34.4 L90,26.6 L91,30.5 L92,26.9 L93,27.4 L94,23.9 L95,26.2 L96,33.6 L97,27.7 L98,27.3 L99,28.5 L100,26.6 L101,28.0 L102,29.3 L103,30.4 L104,34.0 L105,24.4 L106,31.5 L107,28.5 L108,28.8 L109,26.7 L110,24.6 L111,29.0 L112,24.8 L113,30.8 L114,25.8 L115,26.2 L116,28.8 L117,27.2 L118,26.7 L119,25.3 L120,18.2 L121,30.9 L122,26.3 L123,26.8 L124,28.7 L125,28.0 L126,36.1 L127,30.9 L128,33.3 L129,29.9 L130,25.6 L131,26.6 L132,32.9 L133,27.5 L134,26.1 L135,30.8 L136,31.0 L137,28.2 L138,31.3 L139,30.7 L140,24.5 L141,28.9 L142,31.8 L143,23.0 L144,29.3 L145,26.3 L146,28.1 L147,32.3 L148,26.5 L149,31.2 L150,29.3 L151,30.4 L152,26.9 L153,27.2 L154,19.6 L155,24.5 L156,27.7 L157,25.4 L158,21.7 L159,29.1 L160,30.7 L161,30.6 L162,31.4 L163,27.5 L164,29.5 L165,28.8 L166,26.5 L167,28.7 L168,27.2 L169,27.1 L170,31.5 L171,28.6 L172,30.2 L173,27.8 L174,25.9 L175,25.7 L176,28.6 L177,27.4 L178,23.0 L179,28.2 L180,34.6 L181,30.1 L182,31.7 L183,29.3 L184,27.2 L185,24.8 L186,28.4 L187,31.8 L188,27.6 L189,25.5 L190,28.5 L191,30.7 L192,25.9 L193,25.3 L194,26.7 L195,29.9 L196,30.3 L197,21.8 L198,31.2 L199,30.1 L200,30.0 L201,31.1 L202,27.4 L203,24.6 L204,26.5 L205,31.2 L206,28.7 L207,28.8 L208,25.4 L209,27.7 L210,25.3 L211,25.7 L212,28.2 L213,20.3 L214,28.8 L215,28.1 L216,25.9 L217,26.0 L218,26.8 L219,27.3 L220,26.5 L221,29.1 L222,26.1 L223,27.7 L224,28.3 L225,32.6 L226,33.1 L227,28.6 L228,30.1 L229,29.4 L230,26.9 L231,22.6 L232,23.0 L233,28.7 L234,29.0 L235,25.4 L236,19.8 L237,27.7 L238,28.0 L239,30.1 L240,20.8 L241,26.0 L242,27.9 L243,24.6 L244,25.0 L245,26.8 L246,21.9 L247,27.9 L248,26.5 L249,31.7 L250,30.9 L251,31.8 L252,29.1 L253,29.2 L254,28.0 L255,25.4 L256,23.1 L257,27.1 L258,26.3 L259,27.3 L260,26.4 L261,29.0 L262,26.2 L263,26.7 L264,16.0 L265,27.3 L266,28.3 L267,28.5 L268,36.0 L269,29.5 L270,30.2 L271,31.0 L272,27.6 L273,28.5 L274,29.4 L275,30.1 L276,28.9 L277,30.1 L278,30.9 L279,28.7 L280,30.9 L281,24.6 L282,30.5 L283,30.3 L284,31.1 L285,29.0 L286,28.9 L287,27.2 L288,25.3 L289,34.1 L290,31.4 L291,28.1 L292,34.0 L293,26.2 L294,26.5 L295,21.3 L296,32.4 L297,22.0 L298,28.0 L299,32.1 L300,27.1 L301,27.3 L302,31.3 L303,30.3 L304,30.9 L305,28.7 L306,31.0 L307,27.0 L308,31.6 L309,31.7 L310,29.2 L311,27.4 L312,24.6 L313,31.9 L314,31.3 L315,28.8 L316,28.2 L317,30.0 L318,26.4 L319,28.6 L320,18.4 L321,27.8 L322,28.2 L323,26.0 L324,26.0 L325,25.8 L326,27.0 L327,24.6 L328,24.3 L329,26.8 L330,31.5 L331,32.9 L332,28.3 L333,28.8 L334,27.1 L335,23.6 L336,30.0 L337,28.4 L338,30.5 L339,29.7 L340,29.5 L341,28.2 L342,25.1 L343,27.0 L344,28.4 L345,36.3 L346,31.0 L347,32.4 L348,30.3 L349,29.0 L350,28.3 L351,23.3 L352,30.4 L353,26.5 L354,28.4 L355,27.1 L356,27.1 L357,30.6 L358,31.7 L359,25.6 L360,29.0 L361,30.5 L362,33.3 L363,30.3 L364,29.0 L365,31.7 L366,26.1 L367,32.1 L368,28.5 L369,31.2 L370,31.7 L371,33.3 L372,30.1 L373,28.9 L374,19.8 L375,27.4 L376,28.4 L377,29.2 L378,29.2 L379,29.6 L380,31.0 L381,31.3 L382,29.6 L383,33.6 L384,33.9 L385,31.7 L386,32.2 L387,33.4 L388,31.4 L389,27.7 L390,31.4 L391,32.0 L392,30.5 L393,28.8 L394,30.8 L395,34.5 L396,24.0 L397,30.9 L398,29.4 L399,32.5 L400,32.4 L401,28.7 L402,29.3 L403,30.4 L404,26.9 L405,30.6 L406,28.9 L407,28.1 L408,26.5 L409,28.4 L410,23.6 L411,29.6 L412,28.2 L413,28.6 L414,31.3 L415,26.4 L416,28.2 L417,27.7 L418,21.2 L419,19.4 L420,30.1 L421,34.8 L422,27.8 L423,31.1 L424,30.6 L425,28.2 L426,22.8 L427,21.9 L428,25.6 L429,25.9 L430,22.6 L431,25.0 L432,29.1 L433,19.4 L434,27.9 L435,29.3 L436,26.9 L437,27.2 L438,29.2 L439,27.7 L440,29.7 L441,30.9 L442,23.7 L443,27.1 L444,28.9 L445,29.9 L446,30.9 L447,26.8 L448,26.7 L449,28.5 L450,27.0 L451,25.4 L452,26.7 L453,28.2 L454,28.5 L455,28.2 L456,27.0 L457,28.4 L458,24.4 L459,24.9 L460,24.9 L461,27.1 L462,30.7 L463,30.6 L464,26.0 L465,30.7 L466,27.6 L467,23.0 L468,29.4 L469,27.8 L470,26.5 L471,27.7 L472,23.2 L473,26.7 L474,24.0 L475,25.4 L476,25.7 L477,28.7 L478,27.8 L479,31.0 L480,32.2 L481,30.0 L482,31.2 L483,30.8 L484,31.2 L485,28.4 L486,27.2 L487,29.4 L488,26.9 L489,30.7 L490,29.7 L491,27.0 L492,28.7 L493,27.5 L494,31.1 L495,28.8 L496,30.6 L497,31.1 L498,28.5 L499,29.9 L500,32.9 L501,33.3 L502,30.0 L503,35.7 L504,34.4 L505,31.5 L506,30.6 L507,28.1 L508,29.1 L509,31.0 L510,26.9 L511,32.1 L512,30.2 L513,28.2 L514,31.5 L515,31.5 L516,30.5 L517,31.6 L518,31.4 L519,31.7 L520,29.5 L521,30.7 L522,30.4 L523,31.9 L524,32.5 L525,28.8 L526,31.5 L527,30.9 L528,28.3 L529,32.7 L530,31.3 L531,22.7 L532,31.9 L533,33.4 L534,27.0 L535,34.7 L536,33.5 L537,34.2 L538,32.9 L539,34.9 L540,37.4 L541,33.6 L542,33.9 L543,33.3 L544,29.2 L545,31.6 L546,30.3 L547,35.7 L548,36.2 L549,33.2 L550,33.2 L551,33.7 L552,31.2 L553,31.1 L554,30.5 L555,30.6 L556,31.4 L557,33.8 L558,31.6 L559,31.0 L560,35.2 L561,33.3 L562,23.0 L563,31.4 L564,34.4 L565,31.3 L566,31.2 L567,34.5 L568,34.6 L569,32.2 L570,33.1 L571,30.7 L572,35.5 L573,33.4 L574,24.6 L575,33.6 L576,34.6 L577,35.0 L578,33.6 L579,30.4 L580,32.0 L581,31.8 L582,35.1 L583,31.7 L584,27.9 L585,34.3 L586,32.3 L587,35.0 L588,31.0 L589,29.6 L590,29.9 L591,31.9 L592,33.5 L593,38.7 L594,33.3 L595,26.6 L596,32.7 L597,32.0 L598,32.0 L599,31.5 L600,38.0 L601,35.5 L602,32.8 L603,32.1 L604,32.4 L605,33.7 L606,34.8 L607,35.3 L608,35.2 L609,37.1 L610,30.3 L611,28.6 L612,28.2 L613,35.3 L614,33.2 L615,35.1 L616,36.1 L617,31.1 L618,30.5 L619,33.8 L620,32.3 L621,33.3 L622,30.9 L623,31.7 L624,33.5 L625,32.5 L626,33.2 L627,33.9 L628,33.1 L629,33.2 L630,30.5 L631,24.3 L632,29.4 L633,32.3 L634,33.9 L635,30.2 L636,31.0 L637,32.1 L638,26.6 L639,33.6 L640,34.6 L641,35.6 L642,33.5 L643,31.5 L644,27.6 L645,32.3 L646,32.3 L647,36.4 L648,34.1 L649,36.1 L650,22.9 L651,32.9 L652,31.2 L653,35.2 L654,35.6 L654,47 Z" fill="#88b1e3"/><path d="M8.5,29.4V33.9 M11.5,32.2V41.0 M15.5,26.0V31.2 M16.5,27.6V33.8 M34.5,27.6V36.1 M38.5,29.5V37.4 M42.5,28.2V32.7 M43.5,26.5V31.4 M48.5,31.0V36.1 M54.5,27.8V32.9 M71.5,27.2V36.1 M76.5,30.9V37.7 M80.5,30.3V36.6 M81.5,35.0V40.8 M83.5,24.1V32.6 M92.5,28.8V35.2 M96.5,35.2V41.0 M114.5,27.7V36.7 M122.5,28.5V32.7 M142.5,33.3V41.0 M154.5,19.7V28.1 M155.5,26.6V33.4 M158.5,22.1V28.4 M159.5,31.6V36.8 M168.5,28.6V36.2 M177.5,30.2V37.8 M178.5,24.3V31.4 M198.5,32.5V39.3 M201.5,33.6V37.9 M211.5,26.3V33.0 M225.5,35.5V41.0 M231.5,24.3V30.3 M241.5,28.4V32.5 M246.5,24.1V28.7 M265.5,28.0V35.7 M269.5,30.7V38.1 M270.5,30.8V38.2 M273.5,30.0V37.8 M277.5,31.7V38.3 M283.5,30.5V39.2 M291.5,30.2V38.4 M295.5,24.0V32.0 M315.5,29.9V36.2 M316.5,29.2V36.4 M329.5,28.6V36.3 M339.5,31.5V39.3 M340.5,32.3V37.1 M343.5,29.8V35.9 M349.5,29.7V33.9 M353.5,29.5V38.2 M354.5,31.1V37.3 M363.5,32.2V38.5 M365.5,33.0V40.3 M384.5,34.1V39.5 M387.5,35.1V39.4 M388.5,33.4V40.2 M394.5,31.2V39.2 M408.5,29.1V33.5 M409.5,30.1V36.6 M419.5,21.5V28.4 M445.5,31.6V39.5 M446.5,31.1V38.8 M448.5,28.6V33.3 M482.5,33.2V41.0 M486.5,27.6V32.5 M516.5,33.0V41.0 M518.5,32.2V39.8 M519.5,33.1V39.5 M527.5,33.3V38.4 M532.5,32.8V39.1 M536.5,34.7V41.0 M540.5,38.5V41.0 M542.5,36.9V41.0 M555.5,31.1V35.5 M560.5,35.8V40.6 M561.5,34.5V38.9 M571.5,31.9V39.4 M576.5,35.6V41.0 M578.5,34.7V41.0 M598.5,35.0V39.6 M606.5,37.2V41.0 M610.5,30.8V39.7 M619.5,34.4V40.7 M625.5,34.5V39.2 M647.5,38.5V41.0 M653.5,35.6V41.0 " stroke="#3f5a80" stroke-width="1"/><path d="M6.5,25.1V31.2 M14.5,30.1V35.7 M23.5,20.2V28.1 M27.5,30.3V33.6 M39.5,29.3V34.0 M46.5,29.3V33.0 M49.5,25.2V32.2 M52.5,26.7V34.0 M55.5,23.4V28.1 M56.5,27.7V31.2 M58.5,23.4V28.3 M64.5,27.5V35.1 M66.5,27.2V33.9 M68.5,24.7V32.1 M72.5,24.2V28.5 M75.5,30.3V36.9 M79.5,27.0V31.0 M88.5,25.0V28.1 M125.5,26.3V31.8 M128.5,33.3V37.8 M130.5,25.2V32.7 M136.5,29.9V36.9 M146.5,27.7V32.9 M147.5,31.8V36.9 M160.5,30.6V36.7 M167.5,27.5V31.4 M169.5,26.5V31.2 M187.5,30.0V37.1 M190.5,26.2V34.1 M203.5,23.8V30.7 M204.5,26.1V31.7 M212.5,26.4V32.5 M220.5,24.3V32.2 M223.5,26.4V31.9 M234.5,27.8V31.4 M240.5,19.2V26.8 M242.5,27.3V33.8 M248.5,26.0V31.6 M253.5,28.6V34.8 M259.5,25.5V32.5 M264.5,13.5V20.9 M266.5,28.0V35.2 M276.5,28.8V32.3 M279.5,28.3V32.3 M292.5,32.8V39.5 M294.5,26.1V31.7 M304.5,28.6V35.4 M318.5,24.0V30.4 M330.5,30.5V33.8 M331.5,31.9V35.4 M332.5,26.0V31.7 M342.5,23.9V30.0 M347.5,30.7V36.6 M348.5,28.5V33.0 M350.5,26.4V31.3 M357.5,29.3V36.9 M364.5,28.9V34.5 M367.5,30.6V35.7 M373.5,28.6V36.1 M377.5,27.5V33.3 M381.5,30.7V38.5 M392.5,29.6V36.3 M397.5,29.9V34.2 M411.5,27.7V31.1 M412.5,26.5V29.9 M416.5,27.8V32.6 M430.5,21.7V26.6 M434.5,26.5V33.5 M438.5,27.3V34.8 M439.5,27.7V33.3 M451.5,24.9V31.7 M477.5,26.9V34.8 M479.5,30.5V35.6 M480.5,29.7V33.0 M483.5,30.7V36.0 M487.5,28.8V35.4 M489.5,30.2V34.6 M490.5,27.8V32.3 M494.5,28.9V36.5 M499.5,29.8V37.5 M504.5,31.9V38.2 M505.5,31.5V36.9 M510.5,26.5V31.1 M511.5,30.0V35.5 M514.5,30.1V33.9 M530.5,29.2V33.8 M541.5,32.2V37.5 M543.5,31.8V36.2 M546.5,29.4V34.4 M548.5,35.7V42.4 M558.5,30.6V37.8 M582.5,33.1V40.7 M586.5,30.5V38.4 M590.5,27.6V33.7 M591.5,31.6V35.9 M603.5,29.8V37.8 M608.5,33.8V41.0 M609.5,35.8V39.1 M620.5,31.3V37.1 M621.5,32.0V36.4 " stroke="#a8c6ee" stroke-width="1"/></g></svg>
<div class="a" style="left:282px;top:552px;width:9.5px;height:8.5px;background:#efdf7a;border:1px solid #c0a848"></div>
<div class="t" style="left:283.5px;top:551px;font-size:6px;color:#5a4a18;font-style:italic;font-weight:bold">fx</div>
<div class="a" style="left:277px;top:586px;width:9px;height:9px;background:#3e5578"></div>
<div class="t" style="left:279px;top:585px;font-size:7px;color:#c8d6e8">E</div>
<div class="a" style="left:277px;top:633px;width:9px;height:9px;background:#3e5578"></div>
<div class="t" style="left:279px;top:632px;font-size:7px;color:#c8d6e8">D</div>
<!-- playhead -->
<div class="a" style="left:644px;top:398px;width:4px;height:299px;background:rgba(10,14,22,0.45)"></div><div class="a" style="left:645px;top:398px;width:2px;height:299px;background:#7193bd"></div>
<svg style="left:641px;top:391px" width="10" height="9" viewBox="0 0 10 9"><path d="M0.5,0.5 H8.5 V5.5 L4.5,8.5 L0.5,5.5 Z" fill="#5aa2f2"/></svg>
<div class="a" style="left:649px;top:397px;width:20px;height:2px;background:#8cc0f0"></div>
<!-- cursor -->
<svg style="left:622px;top:390px" width="16" height="22" viewBox="0 0 16 22"><circle cx="7.7" cy="7.2" r="6.8" fill="#f2f01c" stroke="#2a2a10" stroke-width="0.8"/><path d="M7.5,7.5 V19 L10,16.5 L12,21 L13.5,20.3 L11.6,15.8 L15,15.8 Z" fill="#fff" stroke="#111" stroke-width="0.8"/></svg>
<div class="a" style="left:120px;top:698px;width:810px;height:7px;background:#1f1f1f"></div>
<!-- right scrollbar -->
<div class="a" style="left:929.5px;top:408px;width:8px;height:281px;background:#353535;border-radius:4px"></div>
<svg style="left:0;top:0" width="1024" height="758"><g fill="#262626" stroke="#cfcfcf" stroke-width="1.4"><circle cx="933.5" cy="415.5" r="3.2"/><circle cx="933.5" cy="544.5" r="3.2"/><circle cx="933.5" cy="555.5" r="3.2"/><circle cx="933.5" cy="677.5" r="3.2"/><circle cx="130.5" cy="701.5" r="3.2"/><circle cx="145.5" cy="701.5" r="3.2"/></g></svg>
<!-- track headers -->
<div class="a" style="left:155px;top:467px;width:23px;height:81px;background:#1c70b6"></div>
<div class="a" style="left:155px;top:551px;width:23px;height:95px;background:#1c70b6"></div>
<div class="a" style="left:155px;top:648px;width:23px;height:34px;background:#1c70b6"></div>
<div class="a" style="left:155px;top:684px;width:23px;height:13px;background:#1c70b6"></div>
<svg style="left:0;top:0" width="1024" height="758"><g transform="translate(145,447)"><path d="M0.5,3 H6.5 V8 H0.5 Z M2.6,4.6 V6.4 H4.4 V4.6 Z" fill="#d6d6d6" fill-rule="evenodd"/><path d="M1.5,3 V1.8 Q1.5,0.3 3.2,0.3 Q4.6,0.3 4.8,1.5" stroke="#d6d6d6" stroke-width="1.1" fill="none"/></g><g transform="translate(183,448)"><path d="M0.5,0.5 H6 L9,2 V6 L6,7.5 H0.5 Z" fill="#d2d2d2"/><path d="M1.5,2.6 H6.5 M1.5,5 H6.5" stroke="#2a2a2a" stroke-width="0.9"/></g><g transform="translate(201,448)"><path d="M0.3,3 Q5,-2.2 9.7,3 Q5,8.2 0.3,3 Z" fill="#d8d8d8"/><circle cx="5" cy="3" r="1.5" fill="#262626"/></g><g transform="translate(145,457)"><path d="M0.5,3 H6.5 V8 H0.5 Z M2.6,4.6 V6.4 H4.4 V4.6 Z" fill="#d6d6d6" fill-rule="evenodd"/><path d="M1.5,3 V1.8 Q1.5,0.3 3.2,0.3 Q4.6,0.3 4.8,1.5" stroke="#d6d6d6" stroke-width="1.1" fill="none"/></g><g transform="translate(183,457)"><path d="M0.5,0.5 H6 L9,2 V6 L6,7.5 H0.5 Z" fill="#d2d2d2"/><path d="M1.5,2.6 H6.5 M1.5,5 H6.5" stroke="#2a2a2a" stroke-width="0.9"/></g><g transform="translate(201,458)"><path d="M0.3,3 Q5,-2.2 9.7,3 Q5,8.2 0.3,3 Z" fill="#d8d8d8"/><circle cx="5" cy="3" r="1.5" fill="#262626"/></g><g transform="translate(183,472)"><path d="M0.5,0.5 H6 L9,2 V6 L6,7.5 H0.5 Z" fill="#d2d2d2"/><path d="M1.5,2.6 H6.5 M1.5,5 H6.5" stroke="#2a2a2a" stroke-width="0.9"/></g><g transform="translate(201,473)"><path d="M0.3,3 Q5,-2.2 9.7,3 Q5,8.2 0.3,3 Z" fill="#d8d8d8"/><circle cx="5" cy="3" r="1.5" fill="#262626"/></g><g transform="translate(145,486)"><path d="M0.5,3 H6.5 V8 H0.5 Z M2.6,4.6 V6.4 H4.4 V4.6 Z" fill="#d6d6d6" fill-rule="evenodd"/><path d="M1.5,3 V1.8 Q1.5,0.3 3.2,0.3 Q4.6,0.3 4.8,1.5" stroke="#d6d6d6" stroke-width="1.1" fill="none"/></g><path d="M190,507 L186,510.5 L190,514 Z" fill="#4a4a4a"/><path d="M206.5,508.0 L209.5,511.0 L206.5,514.0 L203.5,511.0 Z" fill="none" stroke="#4a4a4a" stroke-width="1.1"/><path d="M222.5,507 L226.5,510.5 L222.5,514 Z" fill="#4a4a4a"/><g transform="translate(183,555)"><path d="M0,1 H9 V7 H0 Z" fill="#d8d8d8"/><path d="M1,2.8 H5.5 M1,5.2 H5.5" stroke="#2a2a2a" stroke-width="0.9"/><circle cx="7" cy="4" r="0.9" fill="#2a2a2a"/></g><g transform="translate(202.5,557)"><path d="M0.9,5 V0.6 L3.2,3 L5.5,0.6 V5" stroke="#d2d2d2" stroke-width="1.6" fill="none" stroke-linejoin="bevel"/></g><text x="221.5" y="561.2" font-size="7" font-weight="bold" fill="#d2d2d2" font-family="Liberation Sans" transform="scale(1.15,1)" transform-origin="221 561.5">S</text><g transform="translate(240,554)"><rect x="2.3" y="0" width="3.4" height="6" rx="1.7" fill="#d4d4d4"/><path d="M1,4 Q1,7 4,7 Q7,7 7,4" stroke="#d4d4d4" stroke-width="1" fill="none"/><path d="M4,7 V8.5 M2,8.8 H6" stroke="#d4d4d4" stroke-width="1"/></g><g transform="translate(145,569)"><path d="M0.5,3 H6.5 V8 H0.5 Z M2.6,4.6 V6.4 H4.4 V4.6 Z" fill="#d6d6d6" fill-rule="evenodd"/><path d="M1.5,3 V1.8 Q1.5,0.3 3.2,0.3 Q4.6,0.3 4.8,1.5" stroke="#d6d6d6" stroke-width="1.1" fill="none"/></g><circle cx="186.5" cy="594.5" r="2.8" fill="none" stroke="#d0d0d0" stroke-width="1.2"/><path d="M189.5,597.5 L191.5,597.5 L190.5,599 Z" fill="#d0d0d0"/><path d="M207,591 L203,594.5 L207,598 Z" fill="#4a4a4a"/><path d="M225.5,592.0 L228.5,595.0 L225.5,598.0 L222.5,595.0 Z" fill="none" stroke="#4a4a4a" stroke-width="1.1"/><path d="M242,591 L246,594.5 L242,598 Z" fill="#4a4a4a"/><g transform="translate(183,651)"><path d="M0,1 H9 V7 H0 Z" fill="#d8d8d8"/><path d="M1,2.8 H5.5 M1,5.2 H5.5" stroke="#2a2a2a" stroke-width="0.9"/><circle cx="7" cy="4" r="0.9" fill="#2a2a2a"/></g><g transform="translate(202.5,653)"><path d="M0.9,5 V0.6 L3.2,3 L5.5,0.6 V5" stroke="#d2d2d2" stroke-width="1.6" fill="none" stroke-linejoin="bevel"/></g><text x="221.5" y="657.2" font-size="7" font-weight="bold" fill="#d2d2d2" font-family="Liberation Sans" transform="scale(1.15,1)" transform-origin="221 657.5">S</text><g transform="translate(240,650)"><rect x="2.3" y="0" width="3.4" height="6" rx="1.7" fill="#d4d4d4"/><path d="M1,4 Q1,7 4,7 Q7,7 7,4" stroke="#d4d4d4" stroke-width="1" fill="none"/><path d="M4,7 V8.5 M2,8.8 H6" stroke="#d4d4d4" stroke-width="1"/></g><g transform="translate(145,660)"><path d="M0.5,3 H6.5 V8 H0.5 Z M2.6,4.6 V6.4 H4.4 V4.6 Z" fill="#d6d6d6" fill-rule="evenodd"/><path d="M1.5,3 V1.8 Q1.5,0.3 3.2,0.3 Q4.6,0.3 4.8,1.5" stroke="#d6d6d6" stroke-width="1.1" fill="none"/></g><g transform="translate(183,687)"><path d="M0,1 H9 V7 H0 Z" fill="#d8d8d8"/><path d="M1,2.8 H5.5 M1,5.2 H5.5" stroke="#2a2a2a" stroke-width="0.9"/><circle cx="7" cy="4" r="0.9" fill="#2a2a2a"/></g><g transform="translate(202.5,689)"><path d="M0.9,5 V0.6 L3.2,3 L5.5,0.6 V5" stroke="#d2d2d2" stroke-width="1.6" fill="none" stroke-linejoin="bevel"/></g><text x="221.5" y="693.2" font-size="7" font-weight="bold" fill="#d2d2d2" font-family="Liberation Sans" transform="scale(1.15,1)" transform-origin="221 693.5">S</text><g transform="translate(240,686)"><rect x="2.3" y="0" width="3.4" height="6" rx="1.7" fill="#d4d4d4"/><path d="M1,4 Q1,7 4,7 Q7,7 7,4" stroke="#d4d4d4" stroke-width="1" fill="none"/><path d="M4,7 V8.5 M2,8.8 H6" stroke="#d4d4d4" stroke-width="1"/></g></svg>
<div class="t" style="left:161px;top:446.5px;font-size:7.5px;color:#c8c8c8;letter-spacing:-0.3px">V3</div>
<div class="t" style="left:161px;top:456.5px;font-size:7.5px;color:#c8c8c8;letter-spacing:-0.3px">V2</div>
<div class="t" style="left:162px;top:485px;font-size:7.5px;color:#8ec4f2;letter-spacing:-0.3px">V1</div>
<div class="t" style="left:162px;top:569px;font-size:7.5px;color:#8ec4f2;letter-spacing:-0.3px">A1</div>
<div class="t" style="left:162px;top:659px;font-size:7.5px;color:#8ec4f2;letter-spacing:-0.3px">A2</div>
<div class="t" style="left:180px;top:488px;font-size:8px;color:#bdbdbd;letter-spacing:-0.3px">Vídeo 1</div>
<div class="t" style="left:180px;top:572px;font-size:8px;color:#bdbdbd;letter-spacing:-0.3px">Áudio 1</div>
<div class="t" style="left:180px;top:667px;font-size:8px;color:#bdbdbd;letter-spacing:-0.3px">Áudio 2</div>
<!-- audio meter -->
<div class="a" style="left:958px;top:368px;width:41px;height:321px;background:#1e1e1e"></div>
<div class="a" style="left:958px;top:368px;width:41px;height:7px;background:#262626;border:1px solid #1a1a1a"></div>
<div class="a" style="left:978px;top:368px;width:1px;height:7px;background:#1a1a1a"></div>
<div class="a" style="left:958px;top:375px;width:41px;height:1px;background:#151515"></div>
<div class="a" style="left:959px;top:415.5px;width:40px;height:1.5px;background:#dcdcdc"></div>
<div class="a" style="left:959px;top:425px;width:40px;height:264px;background:linear-gradient(to bottom,#e2f23e 0%,#b8ee46 9%,#66e656 24%,#44e05c 45%,#40d656 75%,#3cc44e 100%)"></div>
<div class="a" style="left:978px;top:425px;width:1.5px;height:264px;background:rgba(20,70,20,0.45)"></div>
<svg style="left:0;top:0" width="1024" height="758"><path d="M1000,376.5H1003 M1000,381.5H1001.5 M1000,386.5H1001.5 M1000,392.5H1003 M1000,397.5H1001.5 M1000,402.5H1001.5 M1000,407.5H1003 M1000,412.5H1001.5 M1000,418.5H1001.5 M1000,423.5H1003 M1000,428.5H1001.5 M1000,433.5H1001.5 M1000,439.5H1003 M1000,444.5H1001.5 M1000,449.5H1001.5 M1000,454.5H1003 M1000,459.5H1001.5 M1000,465.5H1001.5 M1000,470.5H1003 M1000,475.5H1001.5 M1000,480.5H1001.5 M1000,485.5H1003 M1000,491.5H1001.5 M1000,496.5H1001.5 M1000,501.5H1003 M1000,506.5H1001.5 M1000,511.5H1001.5 M1000,517.5H1003 M1000,522.5H1001.5 M1000,527.5H1001.5 M1000,532.5H1003 M1000,538.5H1001.5 M1000,543.5H1001.5 M1000,548.5H1003 M1000,553.5H1001.5 M1000,558.5H1001.5 M1000,564.5H1003 M1000,569.5H1001.5 M1000,574.5H1001.5 M1000,579.5H1003 M1000,584.5H1001.5 M1000,590.5H1001.5 M1000,595.5H1003 M1000,600.5H1001.5 M1000,605.5H1001.5 M1000,610.5H1003 M1000,616.5H1001.5 M1000,621.5H1001.5 M1000,626.5H1003 M1000,631.5H1001.5 M1000,636.5H1001.5 M1000,642.5H1003 M1000,647.5H1001.5 M1000,652.5H1001.5 M1000,657.5H1003 M1000,663.5H1001.5 M1000,668.5H1001.5 M1000,673.5H1003 " stroke="#9a9a9a" stroke-width="1"/></svg>
<div class="t" style="left:1004px;top:371px;font-size:6.5px;color:#a8a8a8;letter-spacing:-0.3px">0</div>
<div class="t" style="left:1004px;top:387px;font-size:6.5px;color:#a8a8a8;letter-spacing:-0.3px">-3</div>
<div class="t" style="left:1004px;top:402px;font-size:6.5px;color:#a8a8a8;letter-spacing:-0.3px">-6</div>
<div class="t" style="left:1004px;top:418px;font-size:6.5px;color:#a8a8a8;letter-spacing:-0.3px">-9</div>
<div class="t" style="left:1004px;top:434px;font-size:6.5px;color:#a8a8a8;letter-spacing:-0.3px">-12</div>
<div class="t" style="left:1004px;top:449px;font-size:6.5px;color:#a8a8a8;letter-spacing:-0.3px">-15</div>
<div class="t" style="left:1004px;top:465px;font-size:6.5px;color:#a8a8a8;letter-spacing:-0.3px">-18</div>
<div class="t" style="left:1004px;top:480px;font-size:6.5px;color:#a8a8a8;letter-spacing:-0.3px">-21</div>
<div class="t" style="left:1004px;top:496px;font-size:6.5px;color:#a8a8a8;letter-spacing:-0.3px">-24</div>
<div class="t" style="left:1004px;top:512px;font-size:6.5px;color:#a8a8a8;letter-spacing:-0.3px">-27</div>
<div class="t" style="left:1004px;top:527px;font-size:6.5px;color:#a8a8a8;letter-spacing:-0.3px">-30</div>
<div class="t" style="left:1004px;top:543px;font-size:6.5px;color:#a8a8a8;letter-spacing:-0.3px">-33</div>
<div class="t" style="left:1004px;top:559px;font-size:6.5px;color:#a8a8a8;letter-spacing:-0.3px">-36</div>
<div class="t" style="left:1004px;top:574px;font-size:6.5px;color:#a8a8a8;letter-spacing:-0.3px">-39</div>
<div class="t" style="left:1004px;top:590px;font-size:6.5px;color:#a8a8a8;letter-spacing:-0.3px">-42</div>
<div class="t" style="left:1004px;top:605px;font-size:6.5px;color:#a8a8a8;letter-spacing:-0.3px">-45</div>
<div class="t" style="left:1004px;top:621px;font-size:6.5px;color:#a8a8a8;letter-spacing:-0.3px">-48</div>
<div class="t" style="left:1004px;top:637px;font-size:6.5px;color:#a8a8a8;letter-spacing:-0.3px">-51</div>
<div class="t" style="left:1004px;top:652px;font-size:6.5px;color:#a8a8a8;letter-spacing:-0.3px">-54</div>
<div class="t" style="left:1004px;top:668px;font-size:6.5px;color:#a8a8a8;letter-spacing:-0.3px">-57</div>
<div class="t" style="left:1004px;top:683px;font-size:6.5px;color:#a8a8a8;letter-spacing:-0.3px">dB</div>
<div class="a" style="left:963px;top:695px;width:12px;height:10px;background:#1d1d1d"></div>
<div class="a" style="left:983px;top:695px;width:12px;height:10px;background:#1d1d1d"></div>
<div class="t" style="left:966px;top:695px;font-size:8px;color:#cfcfcf">S</div>
<div class="t" style="left:986px;top:695px;font-size:8px;color:#cfcfcf">S</div>
<!-- tools -->
<div class="a" style="left:80px;top:361px;width:19px;height:18px;background:#151820;border:1px solid #3a3028"></div>
<svg style="left:0;top:0" width="1024" height="758">
<path d="M86,365 L95.5,372.5 L90.5,373 L86,377.5 Z" fill="#5ca2f0"/>
<g fill="#d0d0d0">
<path d="M83,384h2v1.5h-2z M86.5,384h2v1.5h-2z M83,387.5h1.5v2h-1.5z M83,391.5h2v1.5h-2z M86.5,391.5h2v1.5h-2z"/>
<path d="M87,387.2 H92 V385 L96,388.3 L92,391.6 V389.4 H87 Z"/>
<path d="M96,397 L98,395 V397 Z"/>
<rect x="88.8" y="402" width="1.6" height="12"/>
<path d="M82,408 L87,404.5 V411.5 Z M97,408 L92,404.5 V411.5 Z"/>
<path d="M96,416 L98,414 V416 Z"/>
<path d="M88.2,422.3 L96,430.1 L91.4,434.7 L83.6,426.9 Z"/>
</g>
<path d="M86.6,425.9 L92.4,431.7 M88.6,423.9 L94.4,429.7" stroke="#2a2a2a" stroke-width="0.9"/>
<g fill="#d0d0d0">
<rect x="82" y="440" width="1.5" height="12"/><rect x="95.5" y="440" width="1.5" height="12"/>
<path d="M84.5,446 L87.5,443.5 V445.2 H91.5 V443.5 L94.5,446 L91.5,448.5 V446.8 H87.5 V448.5 Z"/>
<path d="M96,454 L98,452 V454 Z"/>
<path d="M84,471.5 L85.5,465.5 L90.5,461 L94.5,465 L90,470 Z M91.5,460 L93,458.5 Q94.5,458 96,459.5 Q96.5,461 95.5,462 L94.5,463.5 Z"/>
<path d="M96,473 L98,471 V473 Z"/>
<path d="M85,483 Q84.5,481 86,480.5 L87.5,482 V477.5 Q88.5,476.5 89.3,477.5 V476.5 Q90.3,475.5 91.2,476.5 V477.5 Q92.2,476.8 93,477.8 V483 L94.5,481 Q95.5,481 95.5,482 L93,488 Q92,489.5 89.5,489.5 Q87.5,489.5 86.5,487.5 Z"/>
<path d="M96,492 L98,490 V492 Z"/>
<path d="M84,496 H95 V499.5 H93.8 V498 H90.8 V507 H92.3 V508.5 H86.7 V507 H88.2 V498 H85.2 V499.5 H84 Z"/>
<path d="M96,511 L98,509 V511 Z"/>
</g>
</svg>
<!-- left bottom panel -->
<svg style="left:5px;top:357px" width="9" height="7" viewBox="0 0 9 7"><path d="M0,0.5 H8 M0,3.5 H8 M0,6.5 H8" stroke="#dcdcdc" stroke-width="1"/></svg>
<div class="a" style="left:0;top:366px;width:13px;height:2px;background:#cfcfcf"></div>
<div class="t" style="left:29px;top:355px;font-size:8.5px;color:#bdbdbd;letter-spacing:-0.2px">Efei</div>
<svg style="left:59px;top:356px" width="9" height="7" viewBox="0 0 9 7"><path d="M1,0.8 L3.8,3.5 L1,6.2 M5,0.8 L7.8,3.5 L5,6.2" stroke="#d8d8d8" stroke-width="1.6" fill="none"/></svg>
<div class="a" style="left:0;top:377px;width:66px;height:105px;border-top:1px solid #333;border-right:1px solid #303030;border-bottom:1px solid #303030"></div>
<div class="a" style="left:0;top:503px;width:58px;height:1px;background:#333"></div>
<div class="a" style="left:0;top:554px;width:52px;height:1px;background:#333"></div>
<!-- timeline icon row -->
<svg style="left:0;top:0" width="1024" height="758">
<g stroke="#5b9ae6" stroke-width="1.3" fill="none" stroke-linecap="round">
<path d="M129.5,389.5 V394.5 M125,391.5 L129.5,394.5 L134,391.5 M124.5,397.5 L129.5,394.5 L135,397.5 M127,399 L129.5,394.5 L132,399"/>
</g>
<path d="M149.5,398.5 V393.5 A4.2,4.2 0 0 1 158,393.5 V398.5 H155.5 V393.8 A1.7,1.7 0 0 0 152,393.8 V398.5 Z" fill="#4f8fdc"/>
<path d="M149.5,396.5 H152 M155.5,396.5 H158" stroke="#b8d4f4" stroke-width="1"/>
<path d="M173,390 H183 V396 M173,390 V399 H176" stroke="#4f8fdc" stroke-width="1.6" fill="none"/>
<path d="M176.5,391.5 L183,398 L179.8,398 L178,400.5 Z" fill="#7ab4f4"/>
<path d="M199,391.5 H205.5 V396 L202.25,399 L199,396 Z" fill="#d6d6d6"/>
<circle cx="223.3" cy="392.6" r="3" fill="#d4d4d4"/><path d="M223.8,393.2 L230.2,399.4" stroke="#d4d4d4" stroke-width="2.3" stroke-linecap="round"/><path d="M220.8,390.2 L223.2,392.6 L221.5,393.6 Z M222.2,389.2 L224.3,391.9 L225.6,390 Z" fill="#282828"/>
</svg>
